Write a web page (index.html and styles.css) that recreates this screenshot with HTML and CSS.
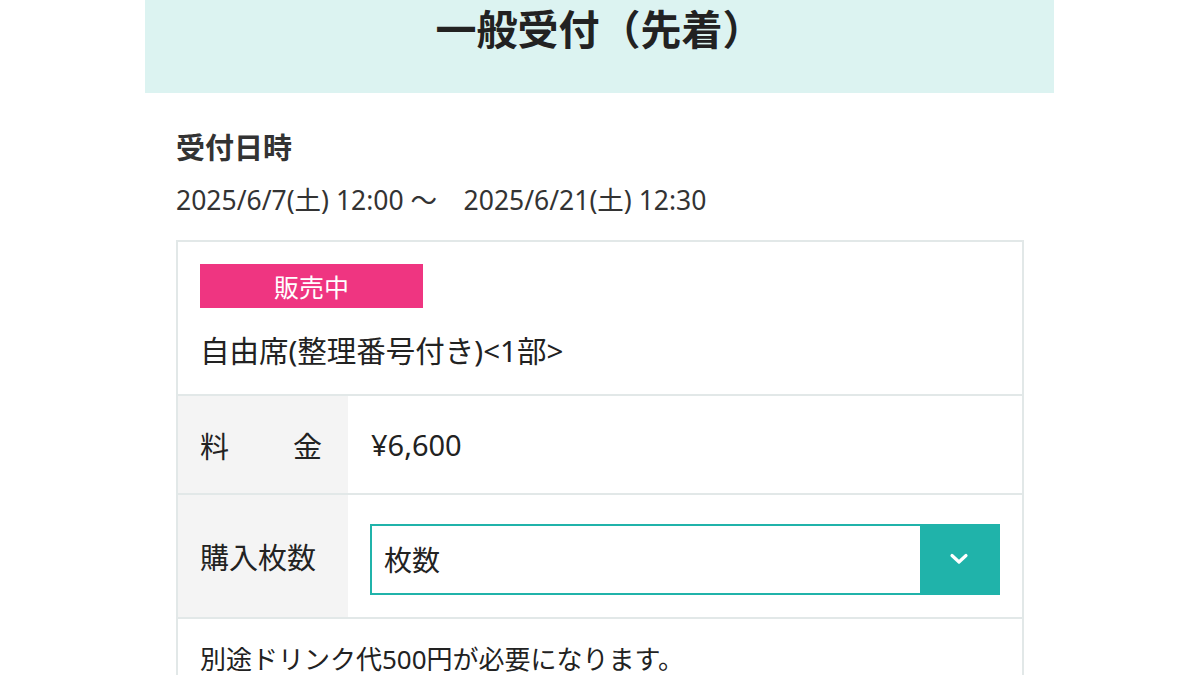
FILE: index.html
```html
<!DOCTYPE html>
<html lang="ja">
<head>
<meta charset="utf-8">
<link rel="stylesheet" href="styles.css">
</head>
<body>
<div class="page">
  <header class="band">
    <h1 class="title">一般受付（先着）</h1>
  </header>
  <section class="body">
    <h2 class="label">受付日時</h2>
    <p class="period">2025/6/7(土) 12:00 〜　2025/6/21(土) 12:30</p>
    <div class="card">
      <div class="card-top">
        <span class="badge">販売中</span>
        <p class="seat">自由席(整理番号付き)&lt;1部&gt;</p>
      </div>
      <div class="row row-price">
        <div class="cell-label"><span class="just"><span>料</span><span>金</span></span></div>
        <div class="cell-value price">¥6,600</div>
      </div>
      <div class="row row-qty">
        <div class="cell-label">購入枚数</div>
        <div class="cell-value">
          <div class="select">
            <span class="select-text">枚数</span>
            <span class="select-btn">
              <svg width="22" height="14" viewBox="0 0 22 14"><path d="M4 3.5 L11 10 L18 3.5" fill="none" stroke="#fff" stroke-width="3.2" stroke-linecap="round" stroke-linejoin="round"/></svg>
            </span>
          </div>
        </div>
      </div>
      <div class="note">別途ドリンク代500円が必要になります。</div>
    </div>
  </section>
</div>
</body>
</html>
```
FILE: styles.css
```css
html, body {
  margin: 0;
  padding: 0;
  background: #fff;
}
body {
  font-family: "Noto Sans", "Noto Sans CJK JP", sans-serif;
  color: #333;
  overflow: hidden;
}
.page {
  width: 909px;
  margin: 0 0 0 145px;
}
.band {
  background: #dcf3f1;
  height: 93px;
  box-sizing: border-box;
  padding-top: 0;
}
.title {
  margin: 0;
  text-align: center;
  font-family: "Noto Sans CJK JP", sans-serif;
  font-size: 41px;
  line-height: 54px;
  font-weight: 700;
  color: #222;
}
.body {
  padding: 0 30px 0 31px;
}
.label {
  margin: 28px 0 0;
  font-family: "Noto Sans CJK JP", sans-serif;
  font-size: 29px;
  line-height: 50px;
  font-weight: 700;
  color: #333;
}
.period {
  margin: 4px 0 0;
  font-size: 26.5px;
  line-height: 50px;
  color: #333;
}
.card {
  margin-top: 15px;
  border: 2px solid #e2e8e8;
  border-bottom: none;
}
.card-top {
  padding: 22px 22px 0;
  height: 154px;
  box-sizing: border-box;
  border-bottom: 2px solid #e2e8e8;
}
.badge {
  display: flex;
  align-items: center;
  justify-content: center;
  width: 223px;
  height: 44px;
  background: #ef3581;
  color: #fff;
  font-size: 25px;
}
.seat {
  margin: 25px 0 0;
  font-size: 29.5px;
  line-height: 36px;
  color: #222;
}
.row {
  display: flex;
  border-bottom: 2px solid #e2e8e8;
}
.cell-label {
  width: 170px;
  flex: none;
  background: #f4f4f4;
  box-sizing: border-box;
  padding-left: 22px;
  padding-right: 26px;
  display: flex;
  align-items: center;
  font-size: 29px;
  color: #222;
}
.just {
  display: flex;
  justify-content: space-between;
  width: 100%;
}
.cell-value {
  flex: 1;
  display: flex;
  align-items: center;
  font-size: 28px;
  color: #222;
  padding-left: 23px;
}
.price {
  font-size: 29px;
}
.row-price {
  height: 97px;
}
.row-qty {
  height: 122px;
}
.row-qty .cell-value {
  padding: 6px 22px 0 22px;
}
.select {
  flex: 1;
  height: 71px;
  box-sizing: border-box;
  border: 2px solid #20b3aa;
  display: flex;
  align-items: stretch;
}
.select-text {
  flex: 1;
  display: flex;
  align-items: center;
  padding-left: 12px;
  font-size: 28px;
  color: #222;
}
.select-btn {
  width: 78px;
  background: #20b3aa;
  display: flex;
  align-items: center;
  justify-content: center;
}
.note {
  padding: 20px 22px 30px;
  font-size: 26px;
  line-height: 40px;
  color: #222;
}
```
